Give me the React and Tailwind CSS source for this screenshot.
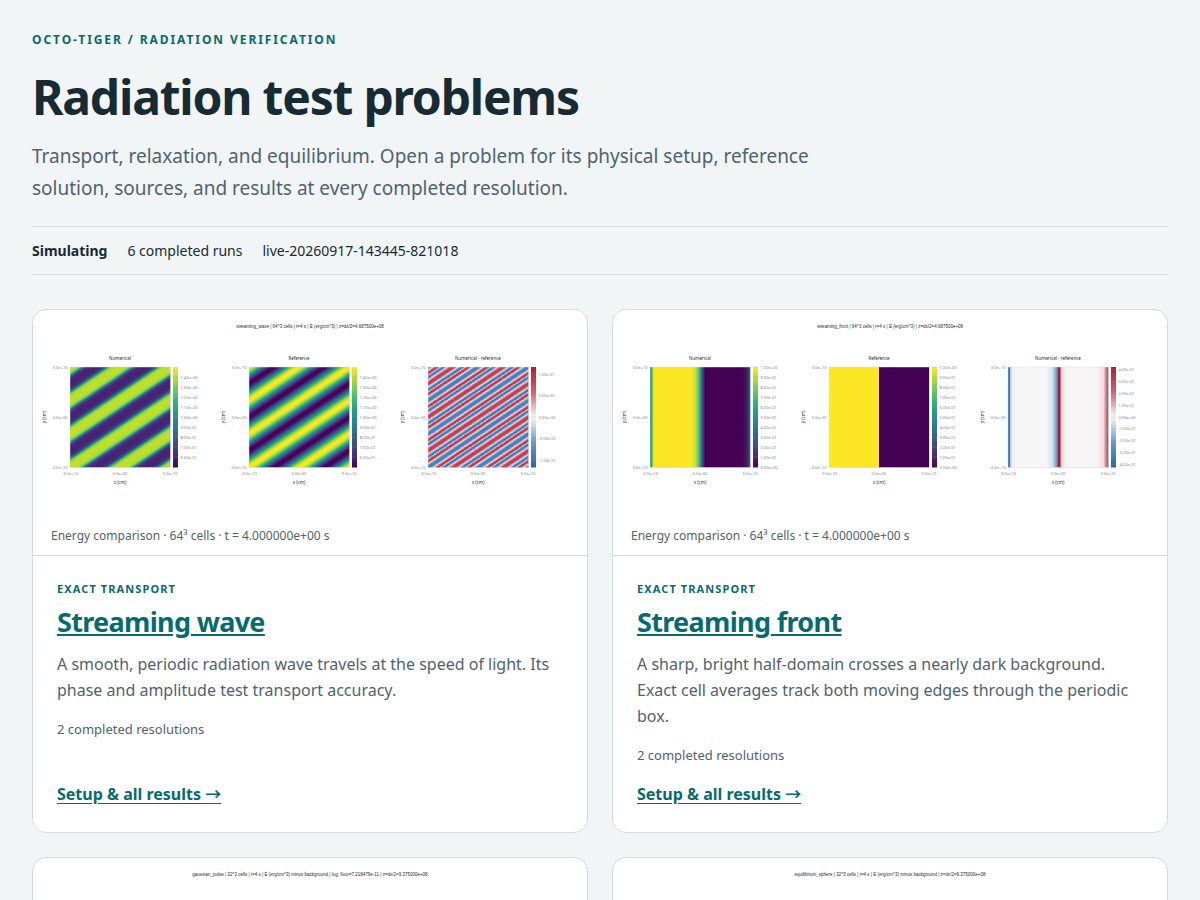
import React from "react";

const VIRIDIS = [
  [68, 1, 84],
  [71, 45, 123],
  [59, 82, 139],
  [44, 114, 142],
  [33, 145, 140],
  [40, 174, 128],
  [94, 201, 98],
  [173, 220, 48],
  [253, 231, 37],
];

const DIVERGING = [
  [33, 102, 172],
  [103, 154, 204],
  [247, 247, 247],
  [214, 96, 112],
  [178, 24, 43],
];

const mapColor = (map, value) => {
  const t = Math.min(1, Math.max(0, value)) * (map.length - 1);
  const i = Math.min(map.length - 2, Math.floor(t));
  const rgb = map[i].map((c, k) => Math.round(c + (map[i + 1][k] - c) * (t - i)));
  return `rgb(${rgb.join(",")})`;
};

const CELLS = 64;
const SIZE = 201;

// the wave has 2 periods in x and 3 in y
const reference = (phase) => 1 + 0.5 * Math.cos(2 * Math.PI * phase);
const numerical = (phase) =>
  1 + 0.41 * Math.tanh(2.4 * Math.cos(2 * Math.PI * phase));
const errorColor = (phase) =>
  mapColor(DIVERGING, (numerical(phase) - reference(phase)) / 0.25 + 0.5);

const waveStops = (fn) =>
  Array.from({ length: 33 }, (_, i) => [i / 32, mapColor(VIRIDIS, fn(i / 32) - 0.5)]);

const waveErrorStops = Array.from({ length: 49 }, (_, i) => [
  i / 48,
  errorColor(i / 48),
]);

const mapStops = (map) =>
  map.map((_, i) => [i / (map.length - 1), mapColor(map, i / (map.length - 1))]);

const frontStops = [
  [0, 0.45],
  [0.015, 0.62],
  [0.035, 0.96],
  [0.06, 1],
  [0.4, 1],
  [0.45, 0.94],
  [0.48, 0.75],
  [0.505, 0.5],
  [0.525, 0.2],
  [0.55, 0],
  [0.92, 0],
  [0.97, 0.08],
  [1, 0.36],
].map(([offset, v]) => [offset, mapColor(VIRIDIS, v)]);

const frontReferenceStops = [
  [0, "#fde725"],
  [0.5, "#fde725"],
  [0.5, "#440154"],
  [1, "#440154"],
];

const frontErrorStops = [
  [0, "#2a69ad"],
  [0.018, "#3a77b6"],
  [0.025, "#b9cfe4"],
  [0.045, "#eef1f5"],
  [0.08, "#f7f7f7"],
  [0.38, "#f7f7f7"],
  [0.44, "#d6e2ee"],
  [0.47, "#8fb4d8"],
  [0.495, "#4d82bb"],
  [0.5, "#7c2b49"],
  [0.512, "#a81b30"],
  [0.52, "#c9596a"],
  [0.535, "#f3d9de"],
  [0.58, "#f7f5f5"],
  [0.88, "#f7f7f7"],
  [0.95, "#f1dcdf"],
  [0.97, "#dc939c"],
  [0.985, "#c5606d"],
  [1, "#8c6570"],
];

// cells that share a phase share a colour, so each phase is one path
const errorCells = Array.from({ length: CELLS }, (_, n) => {
  const step = SIZE / CELLS;
  let d = "";
  for (let j = 0; j < CELLS; j++) {
    for (let i = 0; i < CELLS; i++) {
      if ((2 * i + 3 * j) % CELLS === n) {
        d += `M${i * step} ${j * step}h${step}v${step}h-${step}z`;
      }
    }
  }
  return { d, fill: errorColor((n + 2.5) / CELLS) };
});

const waveTicks = [
  "1.40e+00",
  "1.30e+00",
  "1.20e+00",
  "1.10e+00",
  "1.00e+00",
  "9.00e-01",
  "8.00e-01",
  "7.00e-01",
  "6.00e-01",
].map((label, i) => ({ label, y: 20 + i * 20 }));

const frontTicks = [
  "1.00e+00",
  "9.00e-01",
  "8.00e-01",
  "7.00e-01",
  "6.00e-01",
  "5.00e-01",
  "4.00e-01",
  "3.00e-01",
  "2.00e-01",
  "1.00e-01",
  "0.00e+00",
].map((label, i) => ({ label, y: i * 20 }));

const waveErrorTicks = [
  "1.00e-01",
  "5.00e-02",
  "0.00e+00",
  "-5.00e-02",
  "-1.00e-01",
].map((label, i) => ({ label, y: 14 + i * 43 }));

const frontErrorTicks = [
  "4.00e-01",
  "3.00e-01",
  "2.00e-01",
  "1.00e-01",
  "0.00e+00",
  "-1.00e-01",
  "-2.00e-01",
  "-3.00e-01",
  "-4.00e-01",
].map((label, i) => ({ label, y: 5 + i * 23.75 }));

const problems = [
  {
    id: "wave",
    figureTitle:
      "streaming_wave | 64^3 cells | t=4 s | E (erg/cm^3) | z=dx/2=4.687500e+08",
    panels: [
      { title: "Numerical", x: 74, stops: waveStops(numerical), diagonal: true, map: VIRIDIS, ticks: waveTicks },
      { title: "Reference", x: 432, stops: waveStops(reference), diagonal: true, map: VIRIDIS, ticks: waveTicks },
      { title: "Numerical - reference", x: 790, stops: waveErrorStops, diagonal: true, cells: errorCells, map: DIVERGING, ticks: waveErrorTicks },
    ],
    cells: 64,
    eyebrow: "Exact transport",
    name: "Streaming wave",
    description:
      "A smooth, periodic radiation wave travels at the speed of light. Its phase and amplitude test transport accuracy.",
  },
  {
    id: "front",
    figureTitle:
      "streaming_front | 64^3 cells | t=4 s | E (erg/cm^3) | z=dx/2=4.687500e+08",
    panels: [
      { title: "Numerical", x: 74, stops: frontStops, map: VIRIDIS, ticks: frontTicks },
      { title: "Reference", x: 432, stops: frontReferenceStops, map: VIRIDIS, ticks: frontTicks },
      { title: "Numerical - reference", x: 790, stops: frontErrorStops, map: DIVERGING, ticks: frontErrorTicks },
    ],
    cells: 64,
    eyebrow: "Exact transport",
    name: "Streaming front",
    description:
      "A sharp, bright half-domain crosses a nearly dark background. Exact cell averages track both moving edges through the periodic box.",
  },
  {
    id: "pulse",
    figureTitle:
      "gaussian_pulse | 32^3 cells | t=4 s | E (erg/cm^3) minus background | log; floor=7.218479e-11 | z=dx/2=9.375000e+08",
    panels: [],
    cells: 32,
    eyebrow: "Diffusion",
    name: "Gaussian pulse",
    description: "A smooth pulse of radiation spreads through a uniform background.",
  },
  {
    id: "sphere",
    figureTitle:
      "equilibrium_sphere | 32^3 cells | t=4 s | E (erg/cm^3) minus background | z=dx/2=9.375000e+08",
    panels: [],
    cells: 32,
    eyebrow: "Equilibrium",
    name: "Equilibrium sphere",
    description: "A warm sphere holds its balance between matter and radiation.",
  },
];

const Stops = ({ stops }) =>
  stops.map(([offset, color], i) => (
    <stop key={i} offset={offset} stopColor={color} />
  ));

const Panel = ({ id, panel }) => (
  <g transform={`translate(${panel.x} 114)`}>
    <defs>
      <linearGradient
        id={`${id}-fill`}
        gradientUnits="userSpaceOnUse"
        x1="0"
        y1="0"
        x2={panel.diagonal ? (2 * SIZE) / 13 : SIZE}
        y2={panel.diagonal ? (3 * SIZE) / 13 : 0}
        spreadMethod="repeat"
      >
        <Stops stops={panel.stops} />
      </linearGradient>
      <linearGradient id={`${id}-bar`} x1="0" y1="1" x2="0" y2="0">
        <Stops stops={mapStops(panel.map)} />
      </linearGradient>
    </defs>

    <text x="100" y="-14" textAnchor="middle" fontSize="9" fill="#1f2933">
      {panel.title}
    </text>
    <rect width={SIZE} height={SIZE} fill={`url(#${id}-fill)`} />
    {panel.cells && (
      <g opacity="0.6">
        {panel.cells.map((cell, i) => (
          <path key={i} d={cell.d} fill={cell.fill} />
        ))}
      </g>
    )}
    <rect width={SIZE} height={SIZE} fill="none" stroke="#d5d9de" strokeWidth="1" />

    <g fontSize="8" fill="#7f8691">
      <text x="-5" y="3" textAnchor="end">3.0e+10</text>
      <text x="-5" y="103" textAnchor="end">0.0e+00</text>
      <text x="-5" y="203" textAnchor="end">-3.0e+10</text>
      <text x="0" y="215" textAnchor="middle">-3.0e+10</text>
      <text x="100" y="215" textAnchor="middle">0.0e+00</text>
      <text x="200" y="215" textAnchor="middle">3.0e+10</text>
    </g>
    <g fontSize="9" fill="#1f2933" textAnchor="middle">
      <text x="100" y="234">x (cm)</text>
      <text transform="translate(-49 100) rotate(-90)">y (cm)</text>
    </g>

    <rect x="206" width="10" height={SIZE} fill={`url(#${id}-bar)`} />
    {panel.ticks.map((tick) => (
      <g key={tick.label}>
        <path d={`M206 ${tick.y}h10`} stroke="#8b919c" strokeOpacity="0.5" />
        <text x="221" y={tick.y + 3} fontSize="8" fill="#7f8691">
          {tick.label}
        </text>
      </g>
    ))}
  </g>
);

const Figure = ({ problem }) => (
  <figure className="border-b border-[#d4dde1]">
    <svg
      viewBox="0 0 1108 412"
      role="img"
      aria-label={`${problem.name} energy comparison`}
      className="block w-full"
    >
      <text
        x="554"
        y="35"
        textAnchor="middle"
        fontSize="9"
        fill="#1f2933"
        className="font-['Liberation_Sans',sans-serif]"
      >
        {problem.figureTitle}
      </text>
      {problem.panels.map((panel, i) => (
        <Panel key={panel.title} id={`${problem.id}-${i}`} panel={panel} />
      ))}
    </svg>
    <figcaption className="px-[18px] py-[10px] text-xs leading-[19px] text-[#50636d]">
      Energy comparison · {problem.cells}³ cells · t = 4.000000e+00 s
    </figcaption>
  </figure>
);

const ProblemCard = ({ problem }) => (
  <article className="flex flex-col overflow-hidden rounded-[14px] border border-[#d4dde1] bg-white">
    <Figure problem={problem} />
    <div className="flex flex-1 flex-col items-start px-6 pt-6 pb-[26px]">
      <p className="text-[11px] leading-[18px] font-bold tracking-widest text-[#076b6e] uppercase">
        {problem.eyebrow}
      </p>
      <h2 className="mt-1.5 mb-[11px] text-[27px] leading-9 font-bold tracking-tight">
        <a href={`#${problem.id}`} className="text-[#076b6e] underline">
          {problem.name}
        </a>
      </h2>
      <p className="leading-[26px] text-[#50636d]">{problem.description}</p>
      <p className="my-4 text-[13px] leading-[21px] text-[#50636d]">
        2 completed resolutions
      </p>
      <a
        href={`#${problem.id}-results`}
        className="mt-auto font-['Noto_Sans','Noto_Sans_CJK_SC',sans-serif] leading-6 font-bold text-[#076b6e] underline underline-offset-3"
      >
        Setup &amp; all results →
      </a>
    </div>
  </article>
);

export default function App() {
  return (
    <div className="min-h-screen bg-[#f1f5f6] font-['Noto_Sans',sans-serif] text-[#172b34]">
      <main className="mx-auto max-w-[1440px] p-8">
        <header>
          <p className="text-xs leading-4 font-bold tracking-[0.16em] text-[#076b6e] uppercase">
            Octo-Tiger / Radiation verification
          </p>
          <h1 className="mt-[23px] mb-[17px] text-5xl leading-[52px] font-bold tracking-tight">
            Radiation test problems
          </h1>
          <p className="max-w-[800px] text-[19px] leading-8 text-[#50636d]">
            Transport, relaxation, and equilibrium. Open a problem for its
            physical setup, reference solution, sources, and results at every
            completed resolution.
          </p>
        </header>

        <div className="mt-[22px] mb-[34px] flex flex-wrap gap-x-5 border-y border-[#d4dde1] py-[13px] text-sm leading-[21px]">
          <strong>Simulating</strong>
          <span>6 completed runs</span>
          <span>live-20260917-143445-821018</span>
        </div>

        <section className="grid grid-cols-1 gap-6 md:grid-cols-2">
          {problems.map((problem) => (
            <ProblemCard key={problem.id} problem={problem} />
          ))}
        </section>
      </main>
    </div>
  );
}
